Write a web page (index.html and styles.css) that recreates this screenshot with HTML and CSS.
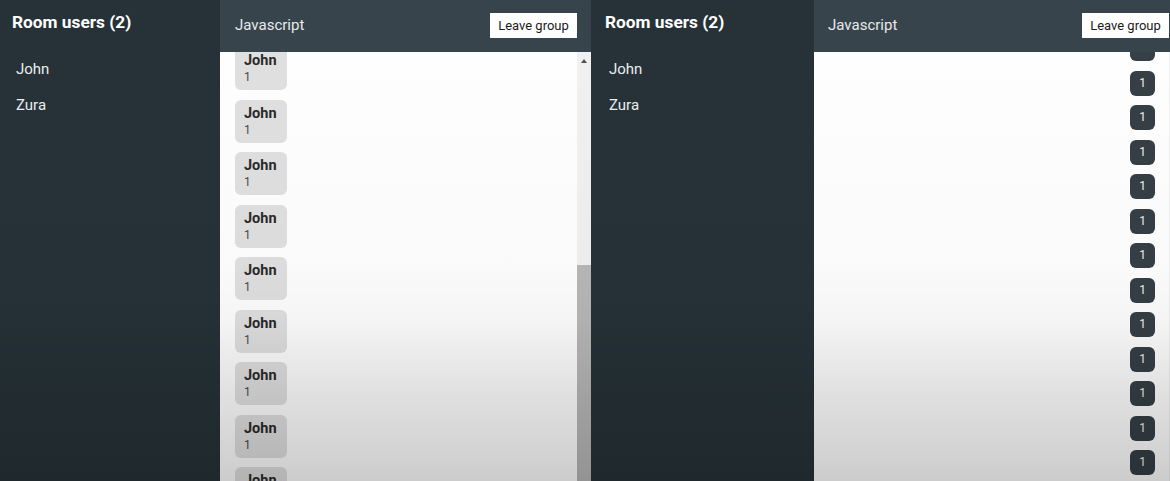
FILE: index.html
```html
<!DOCTYPE html>
<html lang="en">
<head>
<meta charset="utf-8">
<title>Chat rooms</title>
<link rel="stylesheet" href="styles.css">
</head>
<body>
<div class="screen">
  <section class="window window-a">
    <aside class="sidebar">
      <h2 class="sidebar-title">Room users (2)</h2>
      <ul class="user-list">
        <li>John</li>
        <li>Zura</li>
      </ul>
    </aside>
    <main class="chat">
      <header class="chat-header">
        <span class="room-name">Javascript</span>
        <button class="leave-btn">Leave group</button>
      </header>
      <div class="chat-body">
        <div class="messages messages-other">
          <div class="bubble other"><div class="author">John</div><div class="text">1</div></div>
          <div class="bubble other"><div class="author">John</div><div class="text">1</div></div>
          <div class="bubble other"><div class="author">John</div><div class="text">1</div></div>
          <div class="bubble other"><div class="author">John</div><div class="text">1</div></div>
          <div class="bubble other"><div class="author">John</div><div class="text">1</div></div>
          <div class="bubble other"><div class="author">John</div><div class="text">1</div></div>
          <div class="bubble other"><div class="author">John</div><div class="text">1</div></div>
          <div class="bubble other"><div class="author">John</div><div class="text">1</div></div>
          <div class="bubble other"><div class="author">John</div><div class="text">1</div></div>
        </div>
        <div class="scrollbar">
          <span class="scroll-arrow"></span>
          <span class="scroll-track"></span>
          <span class="scroll-thumb"></span>
        </div>
      </div>
    </main>
  </section>

  <section class="window window-b">
    <aside class="sidebar">
      <h2 class="sidebar-title">Room users (2)</h2>
      <ul class="user-list">
        <li>John</li>
        <li>Zura</li>
      </ul>
    </aside>
    <main class="chat">
      <header class="chat-header">
        <span class="room-name">Javascript</span>
        <button class="leave-btn">Leave group</button>
      </header>
      <div class="chat-body">
        <div class="messages messages-own">
          <div class="bubble own"><div class="text">1</div></div>
          <div class="bubble own"><div class="text">1</div></div>
          <div class="bubble own"><div class="text">1</div></div>
          <div class="bubble own"><div class="text">1</div></div>
          <div class="bubble own"><div class="text">1</div></div>
          <div class="bubble own"><div class="text">1</div></div>
          <div class="bubble own"><div class="text">1</div></div>
          <div class="bubble own"><div class="text">1</div></div>
          <div class="bubble own"><div class="text">1</div></div>
          <div class="bubble own"><div class="text">1</div></div>
          <div class="bubble own"><div class="text">1</div></div>
          <div class="bubble own"><div class="text">1</div></div>
          <div class="bubble own"><div class="text">1</div></div>
          <div class="bubble own"><div class="text">1</div></div>
        </div>
        <div class="scrollbar scrollbar-plain"></div>
      </div>
    </main>
  </section>

  <div class="shade"></div>
</div>
</body>
</html>
```

FILE: styles.css
```css
* { box-sizing: border-box; }

html, body {
  margin: 0;
  padding: 0;
  height: 100%;
  overflow: hidden;
  background: #263238;
}

.screen {
  position: relative;
  width: 1170px;
  height: 481px;
  display: flex;
  overflow: hidden;
  font-family: Roboto, "Liberation Sans", Arial, sans-serif;
}

.window {
  display: flex;
  height: 100%;
  flex-shrink: 0;
}

.window-a { width: 591px; }
.window-b { width: 592px; }

/* Sidebar */
.sidebar {
  background: #263238;
  color: #fff;
  flex-shrink: 0;
  padding-top: 12px;
}
.window-a .sidebar { width: 220px; padding-left: 12px; }
.window-b .sidebar { width: 223px; padding-left: 14px; }

.sidebar-title {
  margin: 0;
  font-size: 17.3px;
  line-height: 20px;
  font-weight: 700;
  color: #fff;
}

.user-list {
  list-style: none;
  margin: 19px 0 0;
  padding: 0 0 0 4px;
}
.user-list li {
  font-size: 15px;
  line-height: 36px;
  color: #eceff1;
}

/* Chat */
.chat {
  flex: 1;
  display: flex;
  flex-direction: column;
  min-width: 0;
}

.chat-header {
  height: 52px;
  flex-shrink: 0;
  background: #37444b;
  display: flex;
  align-items: center;
  justify-content: space-between;
  padding: 0 14px 0 15px;
}
.window-b .chat-header { padding-left: 14px; }

.room-name {
  color: #e8eaeb;
  font-size: 15px;
  line-height: 18px;
  margin-top: -2px;
}

.leave-btn {
  font-family: Roboto, "Liberation Sans", Arial, sans-serif;
  font-size: 13px;
  color: #1b1b1b;
  background: #fff;
  border: 0;
  height: 25px;
  width: 87px;
  padding: 0;
  margin-top: -1px;
}

.chat-body {
  flex: 1;
  display: flex;
  background: #fff;
  min-height: 0;
}

.messages {
  flex: 1;
  display: flex;
  flex-direction: column;
  gap: 9.5px;
  overflow: hidden;
}
.messages-other {
  align-items: flex-start;
  padding-left: 15px;
}
.messages-other .bubble:first-child { margin-top: -5px; }

.messages-own {
  align-items: flex-end;
  padding-right: 14px;
}
.messages-own .bubble:first-child { margin-top: -16px; }

.bubble {
  flex-shrink: 0;
  border-radius: 6px;
  padding: 5px 9px;
}
.bubble.other {
  background: #e0e0e0;
  width: 52px;
  height: 43px;
}
.bubble.own {
  background: #353f45;
  width: 25px;
  height: 25px;
  padding: 5px 0;
  text-align: center;
}

.author {
  font-size: 14.5px;
  line-height: 18px;
  font-weight: 700;
  color: #2a2a2a;
}
.text {
  font-size: 12px;
  line-height: 15px;
  color: #4a4a4a;
}
.bubble.own .text { color: #f2f2f2; }

/* Scrollbar */
.scrollbar {
  width: 14px;
  flex-shrink: 0;
  display: flex;
  flex-direction: column;
  background: #f1f1f1;
}
.scroll-arrow {
  height: 17px;
  display: flex;
  justify-content: center;
  align-items: center;
}
.scroll-arrow::before {
  content: "";
  display: block;
  border-left: 3.5px solid transparent;
  border-right: 3.5px solid transparent;
  border-bottom: 4px solid #505050;
}
.scroll-track { flex: 1; }
.scroll-thumb {
  height: 216px;
  background: #b8b8b8;
}

/* Bottom shading over the whole screenshot */
.shade {
  position: absolute;
  inset: 0;
  pointer-events: none;
  background: linear-gradient(to bottom,
    rgba(0,0,0,0) 0%,
    rgba(0,0,0,0.02) 55%,
    rgba(0,0,0,0.04) 66%,
    rgba(0,0,0,0.12) 82%,
    rgba(0,0,0,0.2) 100%);
}
```
